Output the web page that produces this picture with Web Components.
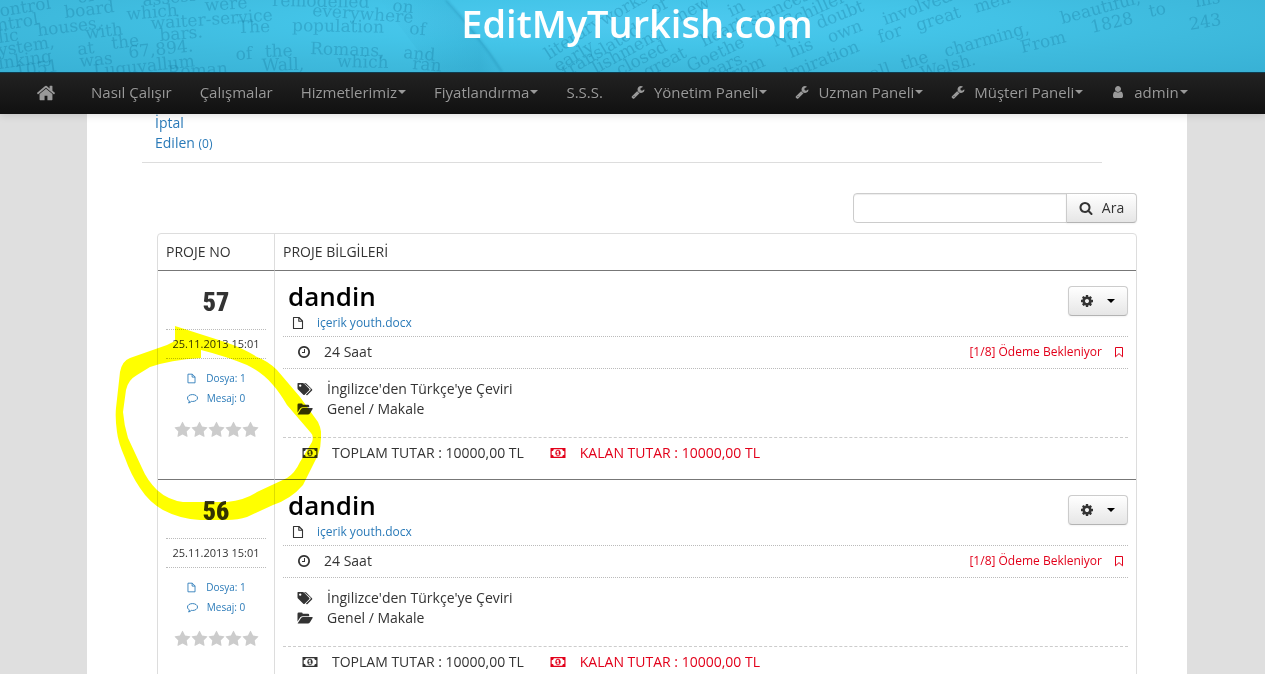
<!DOCTYPE html>
<html lang="tr">
<head>
<meta charset="utf-8">
<title>EditMyTurkish.com</title>
<style>
  body { margin: 0; background: #dfdfdf; color: #333; font: 14px/20px "Open Sans", sans-serif; }
</style>
</head>
<body>
<emt-app></emt-app>

<script>
const ICONS = {
  home: ['0 0 1792 1792', '<path d="M1472 992v480q0 26-19 45t-45 19h-384v-384h-256v384h-384q-26 0-45-19t-19-45v-480q0-1 .5-3t.5-3l575-474 575 474q1 2 1 6zm223-69l-62 74q-8 9-21 11h-3q-13 0-21-7l-692-577-692 577q-12 8-24 7-13-2-21-11l-62-74q-8-10-7-23.5t11-21.5l719-599q32-26 76-26t76 26l244 204v-195q0-14 9-23t23-9h192q14 0 23 9t9 23v408l219 182q10 8 11 21.5t-7 23.5z"/>'],
  wrench: ['0 0 1792 1792', '<path d="M448 1472q0-26-19-45t-45-19-45 19-19 45 19 45 45 19 45-19 19-45zm644-420l-682 682q-37 37-90 37-52 0-91-37l-106-108q-38-36-38-90 0-53 38-91l681-681q39 98 114.500 173.500t173.500 114.500zm634-435q0 39-23 106-47 134-164.500 217.500t-258.500 83.500q-185 0-316.500-131.500t-131.500-316.500 131.500-316.500 316.500-131.500q58 0 121.500 16.500t107.500 46.500q16 11 16 28t-16 28l-293 169v224l193 107q5-3 79-48.500t135.500-81 70.500-35.500q15 0 23.500 10t8.500 25z"/>'],
  user: ['0 0 1792 1792', '<path d="M1536 1399q0 109-62.500 187t-150.500 78h-854q-88 0-150.500-78t-62.500-187q0-85 8.500-160.500t31.500-152 58.500-131 94-89 134.500-34.500q131 128 313 128t313-128q76 0 134.500 34.500t94 89 58.500 131 31.500 152 8.500 160.500zm-256-887q0 159-112.500 271.500t-271.500 112.500-271.500-112.500-112.500-271.500 112.500-271.500 271.500-112.500 271.500 112.500 112.500 271.500z"/>'],
  search: ['0 0 1792 1792', '<path d="M1216 832q0-185-131.500-316.500t-316.500-131.500-316.500 131.500-131.500 316.500 131.500 316.500 316.500 131.500 316.500-131.500 131.500-316.500zm512 832q0 52-38 90t-90 38q-54 0-90-38l-343-342q-179 124-399 124-143 0-273.500-55.500t-225-150-150-225-55.500-273.500 55.500-273.500 150-225 225-150 273.500-55.500 273.500 55.500 225 150 150 225 55.500 273.500q0 220-124 399l343 343q37 37 37 90z"/>'],
  cog: ['0 0 1792 1792', '<path d="M1152 896q0-106-75-181t-181-75-181 75-75 181 75 181 181 75 181-75 75-181zm512-109v222q0 12-8 23t-20 13l-185 28q-19 54-39 91 35 50 107 138 10 12 10 25t-9 23q-27 37-99 108t-94 71q-12 0-26-9l-138-108q-44 23-91 38-16 136-29 186-7 28-36 28h-222q-14 0-24.500-8.500t-11.500-21.500l-28-184q-49-16-90-37l-141 107q-10 9-25 9-14 0-25-11-126-114-165-168-7-10-7-23 0-12 8-23 15-21 51-66.500t54-70.500q-27-50-41-99l-183-27q-13-2-21-12.500t-8-23.500v-222q0-12 8-23t19-13l186-28q14-46 39-92-40-57-107-138-10-12-10-24 0-10 9-23 26-36 98.500-107.500t94.500-71.500q13 0 26 10l138 107q44-23 91-38 16-136 29-186 7-28 36-28h222q14 0 24.500 8.500t11.500 21.500l28 184q49 16 90 37l142-107q9-9 24-9 13 0 25 10 129 119 165 170 7 8 7 22 0 12-8 23-15 21-51 66.500t-54 70.500q26 50 41 98l183 28q13 2 21 12.500t8 23.500z"/>'],
  clock: ['0 0 1792 1792', '<path d="M1024 544v448q0 14-9 23t-23 9h-320q-14 0-23-9t-9-23v-64q0-14 9-23t23-9h224v-352q0-14 9-23t23-9h64q14 0 23 9t9 23zm416 352q0-148-73-273t-198-198-273-73-273 73-198 198-73 273 73 273 198 198 273 73 273-73 198-198 73-273zm224 0q0 209-103 385.500t-279.500 279.500-385.500 103-385.500-103-279.500-279.500-103-385.500 103-385.500 279.500-279.500 385.500-103 385.500 103 279.500 279.500 103 385.500z"/>'],
  star: ['0 0 1792 1792', '<path d="M1728 647q0 22-26 48l-363 354 86 500q1 7 1 20 0 21-10.500 35.500t-30.500 14.500q-19 0-40-12l-449-236-449 236q-22 12-40 12-21 0-31.500-14.500t-10.500-35.500q0-6 2-20l86-500-364-354q-25-27-25-48 0-37 56-46l502-73 225-455q19-41 49-41t49 41l225 455 502 73q56 9 56 46z"/>'],
  file: ['0 0 14 14', '<path fill="none" stroke="currentColor" stroke-width="1.1" stroke-linejoin="round" d="M2.500 1.500h5.500l3.500 3.500v7.500h-9zM7.800 1.500v3.700h3.700"/>'],
  comment: ['0 0 14 14', '<path fill="none" stroke="currentColor" stroke-width="1.2" stroke-linejoin="round" d="M7 2c3.600 0 6.400 2 6.400 4.400s-2.800 4.400-6.400 4.400c-.5 0-1 0-1.500-.1C4.600 11.700 3.400 12.400 2 12.700c.6-.7 1-1.500 1-2.600C1.500 9.300.6 7.900.6 6.400.6 4 3.400 2 7 2z"/>'],
  bookmark: ['0 0 10 12', '<path fill="none" stroke="currentColor" stroke-width="1" stroke-linejoin="round" d="M1.500 1.500h7v9.300l-3.500-3.200-3.500 3.200z"/>'],
  tags: ['0 0 16 14', '<path fill-rule="evenodd" d="M1 1h4.600q.8 0 1.400.6l5.200 5.200q.7.700 0 1.400l-4.500 4.500q-.7.600-1.400 0L1 7.500Q.5 7 .5 6.200V1.500Q.5 1 1 1zM3.200 2.400a1.200 1.200 0 1 0 0 2.400 1.200 1.200 0 0 0 0-2.400z"/><path d="M7.800 1q.9 0 1.500.6l5.700 5.600q.7.700 0 1.400l-4.500 4.300q-.6.500-1.200 0l-.3-.3 4.400-4.400q.7-.8 0-1.600L7 1z"/>'],
  folder: ['0 0 16 14', '<path d="M.5 10.500V2.800Q.5 1.500 1.800 1.500h2.700Q5.700 1.500 5.700 2.800H11q1.200 0 1.200 1.200v1.200H5.800Q4.300 5.200 3.300 6.300z"/><path d="M.7 12.300l3.200-5q.8-1.200 2.200-1.200h9q1 0 .5 1L13 11.300q-.8 1.200-2.200 1.200H1q-.5 0-.3-.2z"/>'],
  money: ['0 0 16 14', '<path fill-rule="evenodd" d="M.5 2h15v10H.5zM3.800 3.200A2.200 2.200 0 0 1 1.700 5.200v3.600a2.200 2.200 0 0 1 2.100 2h8.400a2.200 2.200 0 0 1 2.100-2V5.200a2.200 2.200 0 0 1-2.100-2zM8 3.700c1.600 0 2.700 1.500 2.700 3.300S9.600 10.300 8 10.300 5.300 8.800 5.300 7 6.400 3.700 8 3.700zM7.500 4.800L6.500 5.800v.9h.9v1.700h-.9v.9h3v-.9h-.8V4.800z"/>']
};

function define(name, css, html) {
  const template = document.createElement('template');
  template.innerHTML = `<style>*{box-sizing:border-box}${css}</style>${typeof html === 'string' ? html : ''}`;
  customElements.define(name, class extends HTMLElement {
    connectedCallback() {
      if (this.shadowRoot) return;
      const root = this.attachShadow({ mode: 'open' });
      root.append(template.content.cloneNode(true));
      if (typeof html === 'function') root.innerHTML += html(this);
    }
  });
}

define('emt-icon', `
  :host { display: inline-flex; flex: none; width: var(--icon-w, 14px); height: var(--icon-h, 14px); }
  svg { display: block; width: 100%; height: 100%; fill: currentColor; }
`, el => {
  const [box, body] = ICONS[el.getAttribute('name')];
  return `<svg viewBox="${box}" aria-hidden="true">${body}</svg>`;
});

/* Words printed on the open book behind the site title: text, x, baseline, angle */
const BOOK_WORDS = [
  ['control', -9, 18, -9], ['of', 78, 3, -8],
  ['ntrol', -2, 31, -9], ['board', 65, 18, -7], ['assessed', 143, 6, -6],
  ['lic', -1, 43, -8], ['houses,', 38, 36, -7], ['which', 127, 20, -5], ['were', 205, 11, -4], ['remodelled', 272, 6, 1], ['on', 392, 11, 6],
  ['ystem,', -1, 56, -9], ['with', 86, 39, -7], ['waiter-service', 151, 29, -4], ['everywhere', 312, 16, 4],
  ['inking', -1, 69, -8], ['at', 78, 55, -7], ['the', 112, 49, -7], ['bars.', 160, 41, -5], ['The', 238, 33, -2], ['population', 292, 31, 1], ['of', 409, 34, 4],
  ['1051', 16, 77, -8], ['was', 80, 67, -6], ['67,894.', 129, 58, -6],
  ['Luguvallum', 94, 77, -6], ['of', 236, 60, -4], ['the', 265, 57, -2], ['Romans,', 310, 54, 2], ['and', 403, 58, 5],
  ['Roman', 168, 78, -4], ['Wall,', 262, 71, -2], ['which', 337, 67, 1], ['ran', 412, 69, 5],
  ['literary', 549, 60, -33], ['early', 558, 72, -31], ['translated', 566, 78, -31], ['lishment', 596, 74, -29],
  ['works', 604, 26, -30], ['of', 654, 15, -28], ['new', 680, 22, -28], ['closed', 620, 76, -28],
  ['in', 731, 17, -26], ['heart', 704, 47, -27], ['great', 647, 78, -28], ['Goethe', 690, 72, -25], ['stances', 752, 26, -25], ['Schiller', 786, 28, -24],
  ['ears.', 710, 78, -24], ['No', 775, 47, -23], ['doubt', 819, 29, -22],
  ['from', 729, 82, -24], ['his', 791, 58, -22], ['own', 830, 43, -21], ['involved', 885, 25, -20],
  ['admiration', 773, 86, -22], ['for', 880, 43, -19], ['great', 918, 31, -18], ['men', 976, 13, -17],
  ['all', 872, 80, -19], ['the', 903, 70, -18], ['charming,', 946, 57, -16], ['beautiful,', 1062, 24, -15],
  ['Welsh.', 922, 79, -15], ['From', 1022, 53, -14], ['1828', 1092, 33, -13], ['to', 1150, 17, -12], ['his', 1196, 7, -10], ['243', 1190, 30, -9]
];

define('emt-banner', `
  :host { display: block; position: relative; height: 72px; overflow: hidden;
    background: radial-gradient(ellipse at 50% 30%, #4ecaf0 0%, #43c4e8 35%, #3ebadd 65%, #38b1d5 100%); }
  svg { position: absolute; inset: 0; width: 100%; height: 100%; }
  .words { font: 17px "DejaVu Serif", serif; fill: #17779b; fill-opacity: .32; filter: blur(.6px); }
  h1 { position: relative; margin: 0 0 0 9px; padding-top: 3px; text-align: center; color: #fff; font-size: 38px; line-height: 40px; font-weight: 600; }
`, () => `
  <svg viewBox="0 0 1265 72" preserveAspectRatio="xMidYMid slice" aria-hidden="true">
    <defs><linearGradient id="fold" x1="0" x2="1"><stop offset="0" stop-color="#1f8db3" stop-opacity="0"/><stop offset=".8" stop-color="#1f8db3" stop-opacity=".22"/><stop offset="1" stop-color="#1f8db3" stop-opacity="0"/></linearGradient></defs>
    <path fill="url(#fold)" d="M380 0h66q30 32 58 72h-70z"/>
    <path fill="none" stroke="#1b7fa5" stroke-opacity=".3" stroke-width="2" d="M446 0q32 34 56 72" style="filter:blur(1px)"/>
    <g class="words">${BOOK_WORDS.map(([t, x, y, a]) => `<text transform="translate(${x} ${y}) rotate(${a})">${t}</text>`).join('')}</g>
  </svg>
  <h1>EditMyTurkish.com</h1>`);

define('emt-nav-item', `
  :host { display: block; }
  a { display: flex; align-items: center; height: 40px; padding: 0 14px 2px; color: #999; font-size: 15px; text-decoration: none; white-space: nowrap; text-shadow: 0 -1px 0 rgba(0,0,0,.25); }
  emt-icon { margin-right: 9px; }
  :host([home]) a { padding: 0 21px 0 22px; }
  :host([home]) emt-icon { --icon-w: 20px; --icon-h: 20px; margin: 0; }
  .caret { border: 4px solid transparent; border-top-color: #999; border-bottom: 0; margin-left: 1px; }
`, el => {
  const icon = el.getAttribute('icon');
  return `<a href="#"${el.hasAttribute('home') ? ' aria-label="Ana Sayfa"' : ''}>${icon ? `<emt-icon name="${icon}"></emt-icon>` : ''}<slot></slot>${el.hasAttribute('menu') ? '<span class="caret"></span>' : ''}</a>`;
});

define('emt-nav', `
  :host { display: block; border-top: 1px solid #0f3c4f; border-bottom: 1px solid #111; background: linear-gradient(#222, #111); box-shadow: 0 1px 8px rgba(0,0,0,.15); }
  nav { display: flex; padding-left: 14px; }
`, `
  <nav>
    <emt-nav-item home icon="home"></emt-nav-item>
    <emt-nav-item>Nasıl Çalışır</emt-nav-item>
    <emt-nav-item>Çalışmalar</emt-nav-item>
    <emt-nav-item menu>Hizmetlerimiz</emt-nav-item>
    <emt-nav-item menu>Fiyatlandırma</emt-nav-item>
    <emt-nav-item>S.S.S.</emt-nav-item>
    <emt-nav-item menu icon="wrench">Yönetim Paneli</emt-nav-item>
    <emt-nav-item menu icon="wrench">Uzman Paneli</emt-nav-item>
    <emt-nav-item menu icon="wrench">Müşteri Paneli</emt-nav-item>
    <emt-nav-item menu icon="user">admin</emt-nav-item>
  </nav>`);

const BUTTON = `button { display: flex; align-items: center; justify-content: center; height: 30px; border: 1px solid #ccc; border-bottom-color: #b3b3b3; background: linear-gradient(#fff, #e6e6e6); color: #333; font: inherit; box-shadow: 0 1px 2px rgba(0,0,0,.05); }`;

define('emt-search', `
  :host { display: block; }
  form { display: flex; justify-content: flex-end; }
  input { width: 214px; height: 30px; padding: 4px 6px; border: 1px solid #ccc; border-radius: 4px 0 0 4px; background: #fff; font: inherit; box-shadow: inset 0 1px 1px rgba(0,0,0,.075); }
  ${BUTTON}
  button { gap: 9px; width: 71px; margin-left: -1px; padding: 0; border-radius: 0 4px 4px 0; }
`, `<form><input type="text" aria-label="Proje ara"><button type="button"><emt-icon name="search"></emt-icon>Ara</button></form>`);

define('emt-summary', `
  :host { display: block; text-align: center; }
  .no { padding: 12px 0 8px; font: 900 26px/38px Impact, "Roboto Condensed", Roboto, sans-serif; }
  .date { border: dotted #bbb; border-width: 1px 0; font-size: 11px; line-height: 28px; margin-bottom: 9px; white-space: nowrap; }
  a { display: flex; align-items: center; justify-content: center; gap: 9px; font-size: 10px; color: #2a7ab8; text-decoration: none; --icon-w: 11px; --icon-h: 11px; }
  .stars { display: flex; justify-content: center; margin-top: 13px; color: #ccc; --icon-w: 17px; --icon-h: 18px; }
`, el => `
  <div class="no">${el.getAttribute('number')}</div>
  <div class="date">25.11.2013 15:01</div>
  <a href="#"><emt-icon name="file"></emt-icon>Dosya: 1</a>
  <a href="#"><emt-icon name="comment"></emt-icon>Mesaj: 0</a>
  <div class="stars">${'<emt-icon name="star"></emt-icon>'.repeat(5)}</div>`);

define('emt-details', `
  :host { display: block; }
  .head { display: flex; justify-content: space-between; height: 57px; }
  h2 { margin: 0; padding: 0 5px; color: #000; font-size: 26px; line-height: 34px; font-weight: 600; }
  .line { display: flex; align-items: center; }
  .file { padding-left: 8px; gap: 12px; font-size: 12px; color: #2a7ab8; }
  .file emt-icon { color: #333; }
  a { color: inherit; text-decoration: none; }
  ${BUTTON}
  button { gap: 13px; width: 60px; margin-top: 7px; padding: 0 2px 0 0; border-radius: 4px; }
  .caret { border: 4px solid transparent; border-top-color: #000; border-bottom: 0; }
  .time { height: 33px; border: dotted #bbb; border-width: 1px 0; padding: 0 0 1px 14px; gap: 13px; }
  .state { display: flex; align-items: center; gap: 12px; margin-left: auto; padding-right: 4px; font-size: 12px; color: #e2001a; --icon-w: 10px; --icon-h: 12px; }
  .kind { padding: 10px 14px 18px; }
  .kind .line { gap: 14px; --icon-w: 16px; }
  .sum { border-top: 1px dashed #ccc; padding: 5px 0 0 19px; gap: 14px; --icon-w: 16px; }
  .due { display: flex; align-items: center; gap: 14px; margin-left: 12px; color: #e2001a; }
`, `
  <div class="head">
    <div>
      <h2>dandin</h2>
      <div class="line file"><emt-icon name="file"></emt-icon><a href="#">içerik youth.docx</a></div>
    </div>
    <button type="button" aria-label="İşlemler"><emt-icon name="cog"></emt-icon><span class="caret"></span></button>
  </div>
  <div class="line time"><emt-icon name="clock"></emt-icon>24 Saat<span class="state">[1/8] Ödeme Bekleniyor<emt-icon name="bookmark"></emt-icon></span></div>
  <div class="kind">
    <div class="line"><emt-icon name="tags"></emt-icon>İngilizce'den Türkçe'ye Çeviri</div>
    <div class="line"><emt-icon name="folder"></emt-icon>Genel / Makale</div>
  </div>
  <div class="line sum"><emt-icon name="money"></emt-icon>TOPLAM TUTAR : 10000,00 TL<span class="due"><emt-icon name="money"></emt-icon>KALAN TUTAR : 10000,00 TL</span></div>`);

define('emt-highlight', `
  :host { display: block; position: absolute; left: -42px; top: 93px; width: 206px; height: 196px; pointer-events: none; mix-blend-mode: multiply; }
  svg { display: block; }
`, `<svg width="206" height="196" viewBox="115 326 206 196" aria-hidden="true"><path fill="#ff0" fill-rule="evenodd" d="M175 326L225 342Q243 348 257 357Q268 361 277 370L300 397L318 422Q322 430 321 438Q321 447 318 455L303 485Q291 499 273 505L247 517Q238 520 227 520H200Q180 519 163 510Q149 502 140 488Q131 475 125 458Q118 442 117 432Q115 418 116 408L120 372Q122 361 130 358L167 345L175 341zM201 358Q170 360 150 367L137 375Q128 380 126 390L123 412Q124 425 128 438L142 468Q147 480 157 490Q168 500 183 502H227Q245 500 257 492L287 478Q295 473 300 462L312 442Q314 436 311 433L287 405Q280 393 273 385Q263 373 247 365Q225 356 201 350z"/></svg>`);

define('emt-projects', `
  :host { display: block; position: relative; }
  table { width: 100%; border: 1px solid #ddd; border-radius: 4px; border-spacing: 0; }
  th { height: 36px; padding: 0 8px; text-align: left; font-weight: 400; }
  td { height: 209px; padding: 8px; border-top: 1px solid #777; vertical-align: top; }
  td:first-child { padding-top: 0; }
  th:first-child, td:first-child { width: 116px; }
  th + th, td + td { border-left: 1px solid #ddd; }
`, () => `
  <table>
    <thead><tr><th scope="col">PROJE NO</th><th scope="col">PROJE BİLGİLERİ</th></tr></thead>
    <tbody>${[57, 56].map(n => `<tr><td><emt-summary number="${n}"></emt-summary></td><td><emt-details></emt-details></td></tr>`).join('')}</tbody>
  </table>
  <emt-highlight></emt-highlight>`);

define('emt-app', `
  :host { display: flex; flex-direction: column; height: 100vh; overflow: hidden; }
  header { flex: none; position: relative; z-index: 1; }
  main { flex: 1; min-height: 0; overflow: hidden; margin: -1px 78px 0 87px; padding: 0 50px 0 70px; background: #fff; }
  .tab { margin: 0 35px 30px -15px; padding: 0 13px 8px; border-bottom: 1px solid #ddd; }
  .tab a { display: block; width: 66px; color: #2a7ab8; text-decoration: none; }
  small { font-size: 12px; }
  emt-search { margin-bottom: 10px; }
`, `
  <header><emt-banner></emt-banner><emt-nav></emt-nav></header>
  <main>
    <div class="tab"><a href="#">İptal Edilen <small>(0)</small></a></div>
    <emt-search></emt-search>
    <emt-projects></emt-projects>
  </main>`);
</script>
</body>
</html>
